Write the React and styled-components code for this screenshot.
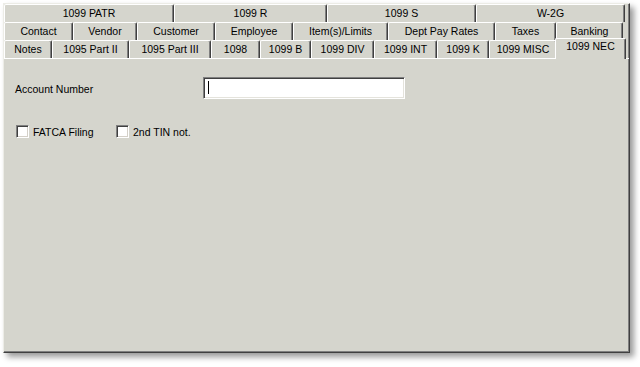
import React from "react";
import styled, { createGlobalStyle } from "styled-components";

const BG = "#d5d5cd";

const Global = createGlobalStyle`
  html, body { margin: 0; padding: 0; background: #fff; }
  body { font-family: "Liberation Sans", Arial, sans-serif; font-size: 10.5px; color: #000; }
`;

const Page = styled.div`
  width: 640px;
  height: 367px;
  padding: 3px 0 0 3px;
  box-sizing: border-box;
  overflow: hidden;
`;

const Window = styled.div`
  width: 627px;
  height: 350px;
  box-sizing: border-box;
  background: ${BG};
  border-top: 1px solid #ecece6;
  border-left: 1px solid #ecece6;
  border-right: 1px solid #404040;
  border-bottom: 1px solid #404040;
  box-shadow: inset -1px -1px 0 #808080, 4px 4px 6px rgba(0, 0, 0, 0.4);
  display: flex;
  flex-direction: column;
`;

const TabRows = styled.div`
  display: flex;
  flex-direction: column;
`;

const Row = styled.div`
  display: flex;
  height: 18px;
  position: relative;
  z-index: ${(p) => p.$z || 0};
`;

const Tab = styled.div`
  width: ${(p) => p.$w}px;
  height: 18px;
  box-sizing: border-box;
  flex: none;
  border-top: 1px solid #fff;
  border-left: 1px solid #fff;
  border-right: 1px solid #404040;
  box-shadow: inset -1px 0 0 #808080;
  border-top-left-radius: 2px;
  border-top-right-radius: 2px;
  background: ${BG};
  text-align: center;
  line-height: 17px;
  white-space: nowrap;
`;

const ActiveTab = styled(Tab)`
  height: 21px;
  margin-top: -2px;
  margin-left: -2px;
  position: relative;
  z-index: 2;
  line-height: 15px;
`;

const Panel = styled.div`
  flex: 1;
  border-top: 1px solid #fff;
  padding: 18px 0 0 11px;
  display: flex;
  flex-direction: column;
`;

const FieldRow = styled.div`
  display: flex;
  align-items: center;
  height: 22px;
`;

const Label = styled.div`
  width: 188px;
  padding-top: 1px;
`;

const Input = styled.div`
  width: 202px;
  height: 22px;
  box-sizing: border-box;
  background: #fff;
  border-top: 1px solid #808080;
  border-left: 1px solid #808080;
  border-right: 1px solid #fff;
  border-bottom: 1px solid #fff;
  box-shadow: inset 1px 1px 0 #404040, inset -1px -1px 0 #e4e3dc;
  padding: 3px 0 0 4px;
`;

const Caret = styled.div`
  width: 1px;
  height: 13px;
  background: #000;
`;

const CheckRow = styled.div`
  display: flex;
  margin-top: 26px;
  padding-left: 1px;
`;

const CheckItem = styled.label`
  display: flex;
  align-items: center;
  gap: 4px;
  width: ${(p) => p.$w}px;
  height: 13px;
`;

const Box = styled.span`
  width: 13px;
  height: 13px;
  box-sizing: border-box;
  background: #fff;
  border-top: 1px solid #808080;
  border-left: 1px solid #808080;
  border-right: 1px solid #fff;
  border-bottom: 1px solid #fff;
  box-shadow: inset 1px 1px 0 #404040, inset -1px -1px 0 #d4d0c8;
  flex: none;
`;

const row1 = [
  ["1099 PATR", 170],
  ["1099 R", 153],
  ["1099 S", 149],
  ["W-2G", 149],
];
const row2 = [
  ["Contact", 69],
  ["Vendor", 64],
  ["Customer", 78],
  ["Employee", 78],
  ["Item(s)/Limits", 95],
  ["Dept Pay Rates", 107],
  ["Taxes", 61],
  ["Banking", 67],
];
const row3 = [
  ["Notes", 48],
  ["1095 Part II", 77],
  ["1095 Part III", 82],
  ["1098", 49],
  ["1099 B", 51],
  ["1099 DIV", 63],
  ["1099 INT", 63],
  ["1099 K", 52],
  ["1099 MISC", 68],
];

export default function App() {
  return (
    <Page>
      <Global />
      <Window>
        <TabRows>
          <Row>
            {row1.map(([t, w]) => (
              <Tab key={t} $w={w}>{t}</Tab>
            ))}
          </Row>
          <Row>
            {row2.map(([t, w]) => (
              <Tab key={t} $w={w}>{t}</Tab>
            ))}
          </Row>
          <Row $z={2}>
            {row3.map(([t, w]) => (
              <Tab key={t} $w={w}>{t}</Tab>
            ))}
            <ActiveTab $w={71}>1099 NEC</ActiveTab>
          </Row>
        </TabRows>
        <Panel>
          <FieldRow>
            <Label>Account Number</Label>
            <Input>
              <Caret />
            </Input>
          </FieldRow>
          <CheckRow>
            <CheckItem $w={100}>
              <Box />
              FATCA Filing
            </CheckItem>
            <CheckItem $w={100}>
              <Box />
              2nd TIN not.
            </CheckItem>
          </CheckRow>
        </Panel>
      </Window>
    </Page>
  );
}
